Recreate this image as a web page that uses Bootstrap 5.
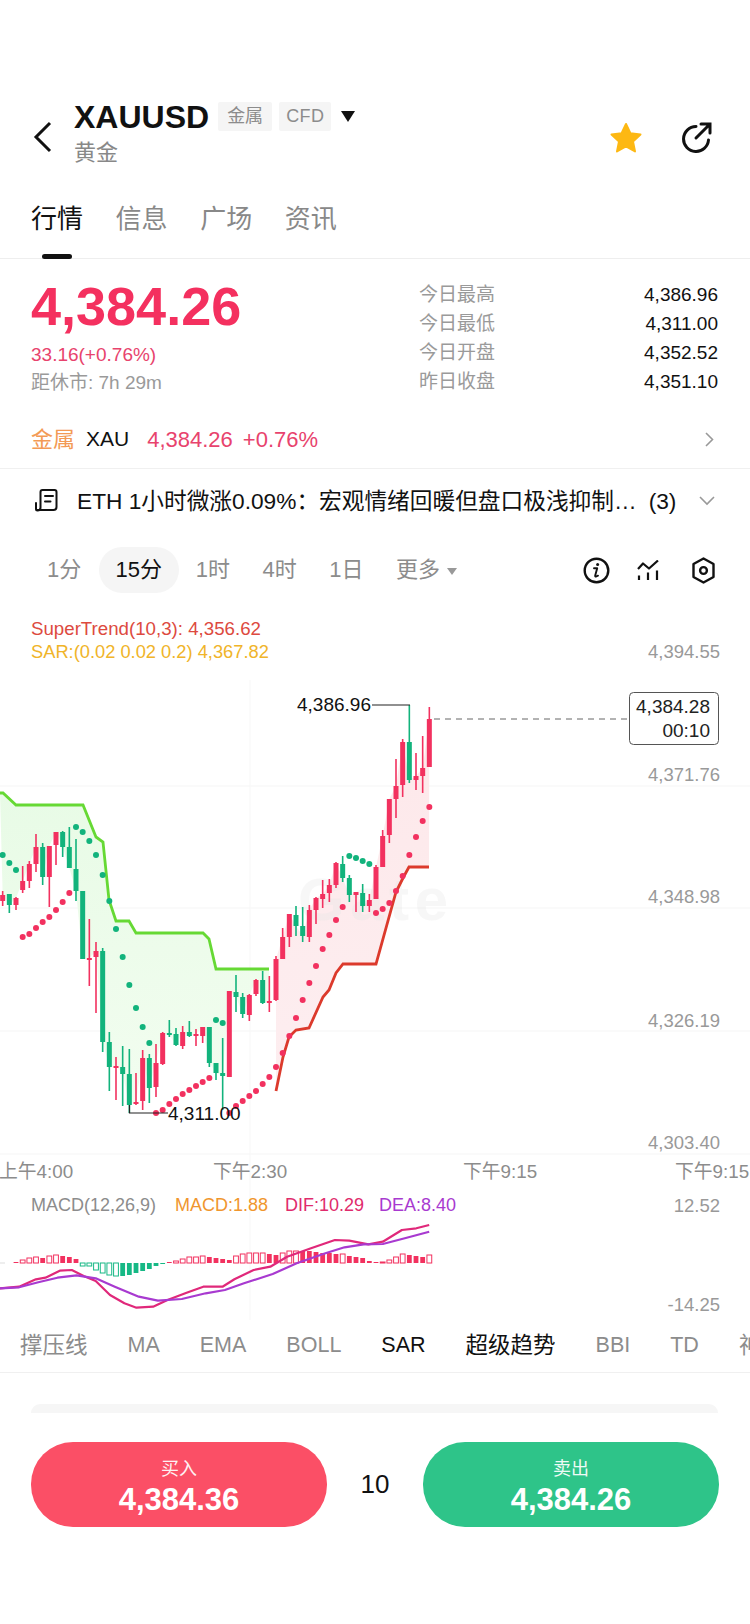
<!DOCTYPE html>
<html lang="zh">
<head>
<meta charset="UTF-8">
<meta name="viewport" content="width=device-width, initial-scale=1.0">
<title>XAUUSD</title>
<link href="https://cdn.jsdelivr.net/npm/bootstrap@5.3.0/dist/css/bootstrap.min.css" rel="stylesheet">
<style>
    body {
        width: 750px;
        height: 1624px;
        overflow: hidden;
        background: #fff;
        color: #111;
        font-family: "Liberation Sans", "Noto Sans CJK SC", sans-serif;
    }

    .head-row { margin-top: 104px; height: 61px; padding: 0 37px 0 31px; }
    .back-ico { margin: 5px 13px 0 0; }
    .sym-name { font-size: 32px; font-weight: 700; line-height: 28px; }
    .sym-tag { background: #f5f5f5; color: #8c8c8c; font-size: 18px; line-height: 29px; height: 29px; padding: 0 9px; border-radius: 2px; margin-right: 7px; }
    .sym-tag-first { margin-left: 9px; }
    .sym-tag-wide { padding: 0 7px; width: 52px; letter-spacing: .4px; }
    .sym-tri { margin-left: 3px; }
    .sym-sub { color: #888; font-size: 22px; line-height: 28px; margin-top: 8px; }
    .star-ico { margin-top: 5px; }
    .share-ico { margin: 5px 0 0 38px; }
    .tab-bar { height: 94px; padding: 27px 31px 0; gap: 32.6px; border-bottom: 1px solid #eee; position: relative; }
    .tab-item { font-size: 26px; line-height: 54px; height: 54px; color: #888; }
    .tab-on { color: #111; position: relative; }
    .tab-on::after { content: ""; position: absolute; left: 11px; right: 11px; bottom: -13px; height: 5px; border-radius: 3px; background: #111; }

    .quote-box { height: 151px; padding: 0 32px 0 31px; }
    .big-price { font-size: 54px; font-weight: 700; line-height: 60px; color: #f4305f; margin-top: 17px; }
    .change-txt { font-size: 19px; line-height: 22px; color: #e8436d; margin-top: 8px; }
    .close-txt { font-size: 19px; line-height: 24px; color: #9a9a9a; margin-top: 5px; }
    .stat-col { width: 299px; padding-top: 21px; }
    .stat-row { height: 29px; line-height: 29px; font-size: 19px; }
    .stat-row span:first-child { color: #9a9a9a; }

    .sector-row { height: 59px; padding: 0 36px 0 31px; border-bottom: 1px solid #f0f0f0; font-size: 21px; }
    .sector-tag { font-size: 22px; color: #f39a55; margin-right: 11px; }
    .sector-val { font-size: 22px; color: #e8436d; margin-left: 18px; }
    .sector-pct { font-size: 22px; color: #e8436d; margin-left: 10px; }

    .news-row { height: 64px; padding: 0 35px 0 34px; font-size: 22.7px; }
    .news-txt { margin-left: 18px; white-space: nowrap; flex: 1; }
    .news-cnt { margin-left: 12px; }

    .frame-row { height: 46px; margin-top: 14px; padding: 0 35px 0 47px; font-size: 22px; color: #8c8c8c; }
    .frame-item { line-height: 46px; }
    .frame-on { width: 80px; height: 46px; border-radius: 23px; background: #f5f5f5; color: #111; text-align: center; margin: 0 17px 0 17.5px; }
    .frame-gap { margin-left: 32.5px; }
    .frame-tri { width: 0; height: 0; border-left: 5px solid transparent; border-right: 5px solid transparent; border-top: 7px solid #999; margin: 2px 0 0 7px; }
    .tool-mid { margin-left: 27px; }
    .tool-end { margin-left: 33px; }

    .chart-box { height: 725px; margin-top: 7px; }
    .chart-box svg { display: block; }
    .chart-box text { font-family: "Liberation Sans", "Noto Sans CJK SC", sans-serif; }

    .ind-row { height: 48px; padding: 0 0 6px 20px; gap: 40px; font-size: 21.5px; color: #8c8c8c; border-bottom: 1px solid #f0f0f0; overflow: hidden; white-space: nowrap; }
    .ind-row .ind-cjk { font-size: 22.5px; }
    .ind-on { color: #111; }

    .sheet-peek { height: 9px; margin: 31px 32px 0 31px; background: #f6f6f6; border-radius: 14px 14px 0 0; }
    .trade-bar { padding: 29px 31px 0; }
    .trade-btn { width: 296px; height: 85px; border: 0; border-radius: 42px; color: #fff; padding: 5px 0 0; text-align: center; }
    .trade-buy { background: #fb4f66; }
    .trade-sell { background: #2ec489; }
    .trade-lab { font-size: 18px; line-height: 24px; opacity: .92; }
    .trade-val { font-size: 31px; font-weight: 700; line-height: 36px; margin-top: 1px; }
    .trade-qty { font-size: 26px; }
</style>
</head>
<body>

    <!-- head -->
    <div class="head-row d-flex align-items-center">
        <svg class="back-ico" width="22" height="32" viewBox="0 0 22 32" fill="none" stroke="#111" stroke-width="3"><path d="M19 2 5 16l14 14"/></svg>
        <div class="ms-2 flex-grow-1">
            <div class="d-flex align-items-center">
                <span class="sym-name">XAUUSD</span>
                <span class="sym-tag sym-tag-first">金属</span>
                <span class="sym-tag sym-tag-wide">CFD</span>
                <svg class="sym-tri" width="14" height="11" viewBox="0 0 14 11"><path d="M0 0h14L7 11z" fill="#111"/></svg>
            </div>
            <div class="sym-sub">黄金</div>
        </div>
        <svg class="star-ico" width="34" height="33" viewBox="0 0 34 32"><path d="M17 2.500l4.400 9.300 10.100 1.200-7.500 6.900 2 10.100L17 25l-9 5 2-10.100L2.500 13l10.100-1.200z" fill="#fdb813" stroke="#fdb813" stroke-width="2" stroke-linejoin="round"/></svg>
        <svg class="share-ico" width="32" height="32" viewBox="0 0 32 32" fill="none" stroke="#111" stroke-width="3" stroke-linecap="round"><path d="M15 5.500A12.500 12.500 0 1 0 27.500 19"/><path d="M15 17 28.500 3.500M20 3h9v9"/></svg>
    </div>

    <div class="tab-bar d-flex">
        <div class="tab-item tab-on">行情</div>
        <div class="tab-item">信息</div>
        <div class="tab-item">广场</div>
        <div class="tab-item">资讯</div>
    </div>

    <!-- quote -->
    <div class="quote-box d-flex justify-content-between">
        <div>
            <div class="big-price">4,384.26</div>
            <div class="change-txt">33.16(+0.76%)</div>
            <div class="close-txt">距休市: 7h 29m</div>
        </div>
        <div class="stat-col">
            <div class="stat-row d-flex justify-content-between"><span>今日最高</span><span>4,386.96</span></div>
            <div class="stat-row d-flex justify-content-between"><span>今日最低</span><span>4,311.00</span></div>
            <div class="stat-row d-flex justify-content-between"><span>今日开盘</span><span>4,352.52</span></div>
            <div class="stat-row d-flex justify-content-between"><span>昨日收盘</span><span>4,351.10</span></div>
        </div>
    </div>

    <div class="sector-row d-flex align-items-center">
        <span class="sector-tag">金属</span>
        <span>XAU</span>
        <span class="sector-val">4,384.26</span>
        <span class="sector-pct">+0.76%</span>
        <svg class="ms-auto" width="9" height="15" viewBox="0 0 9 15" fill="none" stroke="#999" stroke-width="1.6"><path d="M1 1l6.500 6.500L1 14"/></svg>
    </div>

    <div class="news-row d-flex align-items-center">
        <svg width="25" height="24" viewBox="0 0 25 24" fill="none" stroke="#111" stroke-width="2" stroke-linejoin="round" stroke-linecap="round"><path d="M2 14v6a1.500 1.500 0 0 0 1.500 1.500h0a3 3 0 0 0 3-3V3a2 2 0 0 1 2-2h12a2 2 0 0 1 2 2v15a3 3 0 0 1-3 3H3.500"/><path d="M11 7h8M11 12.500h5.500"/></svg>
        <div class="news-txt">ETH 1小时微涨0.09%：宏观情绪回暖但盘口极浅抑制…<span class="news-cnt">(3)</span></div>
        <svg width="16" height="10" viewBox="0 0 16 10" fill="none" stroke="#999" stroke-width="1.6"><path d="M1 1l7 7 7-7"/></svg>
    </div>

    <!-- time frames -->
    <div class="frame-row d-flex align-items-center">
        <div class="frame-item">1分</div>
        <div class="frame-item frame-on">15分</div>
        <div class="frame-item">1时</div>
        <div class="frame-item frame-gap">4时</div>
        <div class="frame-item frame-gap">1日</div>
        <div class="frame-item frame-gap">更多</div>
        <div class="frame-tri"></div>
        <svg class="ms-auto" width="27" height="27" viewBox="0 0 27 27" fill="none" stroke="#111" stroke-width="2.400"><circle cx="13.500" cy="13.500" r="11.800"/><circle cx="14.600" cy="7.600" r="1.500" fill="#111" stroke="none"/><path d="M11 11.200h3.200l-2 7.200q-.3 1.300 1 1.100l1.800-.8" stroke-width="1.900" stroke-linecap="round" stroke-linejoin="round"/></svg>
        <svg class="tool-mid" width="22" height="21" viewBox="0 0 22 21" fill="none" stroke="#111" stroke-width="2.200" stroke-linejoin="round"><path d="M1 9l5-5.500 6 5L21 .5"/><path d="M2 15.500V20M11 12.500V20M20 10.500V20"/></svg>
        <svg class="tool-end" width="23" height="27" viewBox="0 0 23 27" fill="none" stroke="#111" stroke-width="2.400" stroke-linejoin="round"><path d="M11.500 1.500 21.500 7v13l-10 5.500L1.500 20V7z"/><circle cx="11.500" cy="13.500" r="3.400"/></svg>
    </div>

    <!-- chart, drawn from the data below -->
    <div class="chart-box">
        <svg id="chart" width="750" height="725" viewBox="0 600 750 725"></svg>
    </div>

    <!-- indicators -->
    <div class="ind-row d-flex align-items-center">
        <span class="ind-cjk">撑压线</span>
        <span>MA</span>
        <span>EMA</span>
        <span>BOLL</span>
        <span class="ind-on">SAR</span>
        <span class="ind-on ind-cjk">超级趋势</span>
        <span>BBI</span>
        <span>TD</span>
        <span class="ind-cjk">神奇九转</span>
    </div>

    <div class="sheet-peek"></div>

    <!-- trade buttons -->
    <div class="trade-bar d-flex justify-content-between align-items-center">
        <button class="trade-btn trade-buy">
            <div class="trade-lab">买入</div>
            <div class="trade-val">4,384.36</div>
        </button>
        <span class="trade-qty">10</span>
        <button class="trade-btn trade-sell">
            <div class="trade-lab">卖出</div>
            <div class="trade-val">4,384.26</div>
        </button>
    </div>

    <script>
        const UP = '#f2315f', DOWN = '#12b37c';
        const stepX = 20 / 3, firstX = 8 / 3;
        const xOf = i => firstX + i * stepX;

        // colour, wick top, body top, body bottom, wick bottom
        const candles = [
            ['r',891,895,901,906],['g',894,894,905,913],['r',897,898,905,910],['r',866,881,890,893],['r',861,864,881,888],
            ['r',834,847,864,872],['g',843,847,877,885],['r',846,846,877,907],['r',832,832,845,865],['g',831,832,847,857],
            ['g',827,847,868,868],['g',839,869,891,901],['g',891,891,959,959],['r',919,958,960,986],['r',942,951,957,1013],
            ['g',948,951,1042,1052],['g',1032,1042,1067,1091],['r',1057,1066,1067,1100],['g',1046,1067,1074,1106],['g',1049,1074,1105,1113],
            ['r',1073,1102,1104,1105],['r',1050,1058,1101,1110],['g',1054,1058,1088,1103],['r',1044,1063,1087,1097],['r',1032,1033,1064,1065],
            ['g',1020,1033,1035,1037],['g',1028,1034,1045,1046],['r',1026,1032,1046,1049],['g',1021,1032,1036,1037],['r',1029,1034,1036,1046],
            ['r',1027,1027,1036,1043],['g',1027,1027,1063,1067],['g',1063,1063,1073,1080],['g',1038,1073,1076,1110],['r',991,991,1077,1077],
            ['g',975,992,997,1012],['g',993,997,1014,1018],['r',994,995,1015,1021],['r',979,980,994,996],['g',971,980,1003,1004],
            ['r',976,1001,1003,1012],['r',956,959,1000,1001],['r',928,937,959,959],['r',914,914,937,947],['g',906,915,926,936],
            ['g',907,926,936,942],['r',905,910,937,942],['r',897,898,910,924],['r',880,894,899,908],['r',879,885,893,902],
            ['r',862,863,885,888],['g',856,864,878,882],['g',875,878,895,902],['r',892,892,895,912],['g',884,893,906,912],
            ['r',894,900,906,912],['r',865,867,899,899],['r',830,836,867,867],['r',799,799,835,843],['r',759,786,799,818],
            ['r',739,742,785,797],['g',705,742,780,783],['r',753,776,780,790],['r',736,768,776,793],['r',707,719,767,767]
        ];

        const greenLine = [[0,793],[3,793],[16,805],[83,805],[96,837],[103,842],[109,900],[116,921],[129,921],[136,933],[203,933],[209,939],[216,969],[269,969]];
        const redLine = [[276,1091],[283,1057],[289,1037],[296,1030],[309,1028],[323,997],[329,990],[336,973],[343,964],[376,964],[396,892],[403,878],[409,867],[429,867]];

        // SAR dots, index into the candle grid : y
        const greenDots = {0:855,1:863,2:870,11:827,12:832,13:841,14:855,15:875,16:901,17:929,18:957,19:985,20:1008,21:1027,22:1043,32:1020,33:1023,52:856,53:858,54:861,55:864};
        const redDots = {3:937,4:934,5:928,6:922,7:917,8:910,9:902,10:893,23:1113,24:1110,25:1104,26:1099,27:1094,28:1090,29:1086,30:1082,31:1078,34:1113,35:1106,36:1101,37:1096,38:1091,39:1084,40:1077,41:1067,42:1053,43:1036,44:1018,45:1000,46:983,47:966,48:949,49:935,50:920,51:907,56:913,57:909,58:903,59:891,60:876,61:855,62:837,63:821,64:807};

        // MACD histogram from candle 2 on: height, filled (1) or hollow (0)
        const hist = [
            [1,1],[3,0],[5,0],[6,0],[5,1],[7,0],[8,0],[7,1],[6,1],[4,1],
            [-3,0],[-3,0],[-7,0],[-10,0],[-12,0],[-13,0],[-13,1],[-12,1],[-10,1],[-8,1],[-6,1],[-3,1],[-1,1],
            [1,1],[2,0],[4,0],[6,0],[6,0],[7,0],[6,1],[5,1],[4,1],[3,1],
            [7,0],[9,0],[10,0],[10,0],[10,0],[9,1],[8,1],[10,0],[12,0],[12,0],
            [12,1],[12,1],[11,1],[10,1],[10,1],[9,1],[9,0],[7,1],[6,1],[5,1],
            [2,1],[1,1],[1,0],[3,0],[6,0],[9,0],[8,1],[7,1],[6,1],[8,0]
        ];

        const zx = x => +(x / 2.09).toFixed(1), zy = y => +(1150 + y / 3).toFixed(1);
        const dif = [[0,415],[40,410],[75,388],[95,383],[125,362],[150,360],[175,378],[200,393],[230,435],[260,460],[285,473],[320,470],[350,450],[390,428],[425,410],[465,410],[490,388],[530,360],[565,350],[600,320],[650,295],[700,270],[730,272],[770,283],[800,275],[840,240],[870,235],[897,225]];
        const dea = [[0,415],[40,412],[80,397],[120,383],[160,376],[200,385],[240,410],[290,440],[330,452],[380,447],[430,430],[470,420],[510,400],[570,372],[620,340],[680,310],[720,292],[760,283],[800,282],[850,263],[897,245]];

        const closeOf = c => c[0] === 'r' ? c[2] : c[3];
        const pts = a => a.map(p => p.join(',')).join(' ');

        let out = `<defs>
            <linearGradient id="upFill" x1="0" y1="0" x2="0" y2="1"><stop offset="0" stop-color="#fde8ea"/><stop offset="1" stop-color="#fdeef0"/></linearGradient>
            <linearGradient id="dnFill" x1="0" y1="0" x2="0" y2="1"><stop offset="0" stop-color="#e8fbe6"/><stop offset="1" stop-color="#f2fdf0"/></linearGradient>
        </defs>`;

        // grid
        [786, 908, 1031, 1154].forEach(y => { out += `<line x1="0" x2="750" y1="${y}" y2="${y}" stroke="#f5f5f5"/>`; });
        out += `<line x1="250" x2="250" y1="680" y2="1320" stroke="#f7f7f7"/>`;

        // trend areas
        const greenEdge = [], redEdge = [];
        candles.forEach((c, i) => {
            const x = xOf(i);
            if (i <= 40) greenEdge.unshift([+x.toFixed(1), closeOf(c)]);
            if (i >= 41) redEdge.unshift([+x.toFixed(1), closeOf(c)]);
        });
        out += `<polygon fill="url(#dnFill)" points="${pts(greenLine)} ${pts(greenEdge)}"/>`;
        out += `<polygon fill="url(#upFill)" points="${pts(redLine)} ${pts(redEdge)}"/>`;
        out += `<text x="298" y="920" font-size="60" font-weight="700" fill="#e6e6e6" fill-opacity=".3" textLength="150">Gate</text>`;
        out += `<polyline fill="none" stroke="#66d934" stroke-width="2.800" points="${pts(greenLine)}"/>`;
        out += `<polyline fill="none" stroke="#dc3a2c" stroke-width="2.800" points="${pts(redLine)}"/>`;

        // candles
        candles.forEach((c, i) => {
            const x = xOf(i), col = c[0] === 'r' ? UP : DOWN;
            out += `<line x1="${x}" x2="${x}" y1="${c[1]}" y2="${c[4]}" stroke="${col}" stroke-width="1.600"/>`;
            out += `<rect x="${x - 2.5}" y="${c[2]}" width="5" height="${Math.max(c[3] - c[2], 2)}" fill="${col}"/>`;
        });

        // SAR dots
        Object.entries(greenDots).forEach(([i, y]) => { out += `<circle cx="${xOf(+i)}" cy="${y}" r="3" fill="${DOWN}"/>`; });
        Object.entries(redDots).forEach(([i, y]) => { out += `<circle cx="${xOf(+i)}" cy="${y}" r="3" fill="${UP}"/>`; });

        // high / low markers
        out += `<polyline fill="none" stroke="#222" stroke-width="1.200" points="372,705 410,705"/>`;
        out += `<text x="297" y="711" font-size="19" fill="#111">4,386.96</text>`;
        out += `<polyline fill="none" stroke="#222" stroke-width="1.200" points="129.500,1105 129.500,1113 168,1113"/>`;
        out += `<text x="168" y="1120" font-size="19" fill="#111">4,311.00</text>`;

        // last price
        out += `<line x1="434" x2="629" y1="719" y2="719" stroke="#666" stroke-dasharray="6 5"/>`;
        out += `<rect x="629.500" y="692.500" width="89" height="52" rx="4" fill="#fff" stroke="#555"/>`;
        out += `<text x="710" y="713" font-size="19" text-anchor="end" fill="#222">4,384.28</text>`;
        out += `<text x="710" y="737" font-size="19" text-anchor="end" fill="#222">00:10</text>`;

        // legend and axis
        out += `<text x="31" y="635" font-size="18.700" fill="#dd4a40">SuperTrend(10,3): 4,356.62</text>`;
        out += `<text x="31" y="658" font-size="18.300" fill="#f0b429">SAR:(0.02 0.02 0.2) 4,367.82</text>`;
        [['4,394.55',658],['4,371.76',781],['4,348.98',903],['4,326.19',1027],['4,303.40',1149],['12.52',1212],['-14.25',1311]].forEach(([t, y]) => {
            out += `<text x="720" y="${y}" font-size="18.500" text-anchor="end" fill="#999">${t}</text>`;
        });
        [['上午4:00',-1],['下午2:30',213],['下午9:15',463],['下午9:15',675]].forEach(([t, x]) => {
            out += `<text x="${x}" y="1178" font-size="18.800" fill="#8c8c8c">${t}</text>`;
        });
        [['MACD(12,26,9)',31,'#8c8c8c'],['MACD:1.88',175,'#f0962e'],['DIF:10.29',285,'#e02b6c'],['DEA:8.40',379,'#a83ad0']].forEach(([t, x, col]) => {
            out += `<text x="${x}" y="1211" font-size="18" fill="${col}">${t}</text>`;
        });

        // MACD
        const base = 1263;
        out += `<line x1="0" x2="5" y1="${base}" y2="${base}" stroke="#ddd"/>`;
        hist.forEach((b, n) => {
            const x = xOf(n + 2) - 2.4, h = Math.abs(b[0]), top = b[0] > 0 ? base - h : base;
            const col = b[0] > 0 ? UP : '#16b885';
            out += `<rect x="${x}" y="${top}" width="4.800" height="${h}" fill="${b[1] ? col : '#fff'}" stroke="${col}" stroke-width="${b[1] ? 0 : 1}"/>`;
        });
        const mapLine = a => a.map(p => [zx(p[0]), zy(p[1])]);
        out += `<polyline fill="none" stroke="#e0287a" stroke-width="2.200" stroke-linejoin="round" points="${pts(mapLine(dif))}"/>`;
        out += `<polyline fill="none" stroke="#a83ad0" stroke-width="2.200" stroke-linejoin="round" points="${pts(mapLine(dea))}"/>`;

        document.getElementById('chart').innerHTML = out;
    </script>
    <script src="https://cdn.jsdelivr.net/npm/bootstrap@5.3.0/dist/js/bootstrap.bundle.min.js"></script>
</body>
</html>
